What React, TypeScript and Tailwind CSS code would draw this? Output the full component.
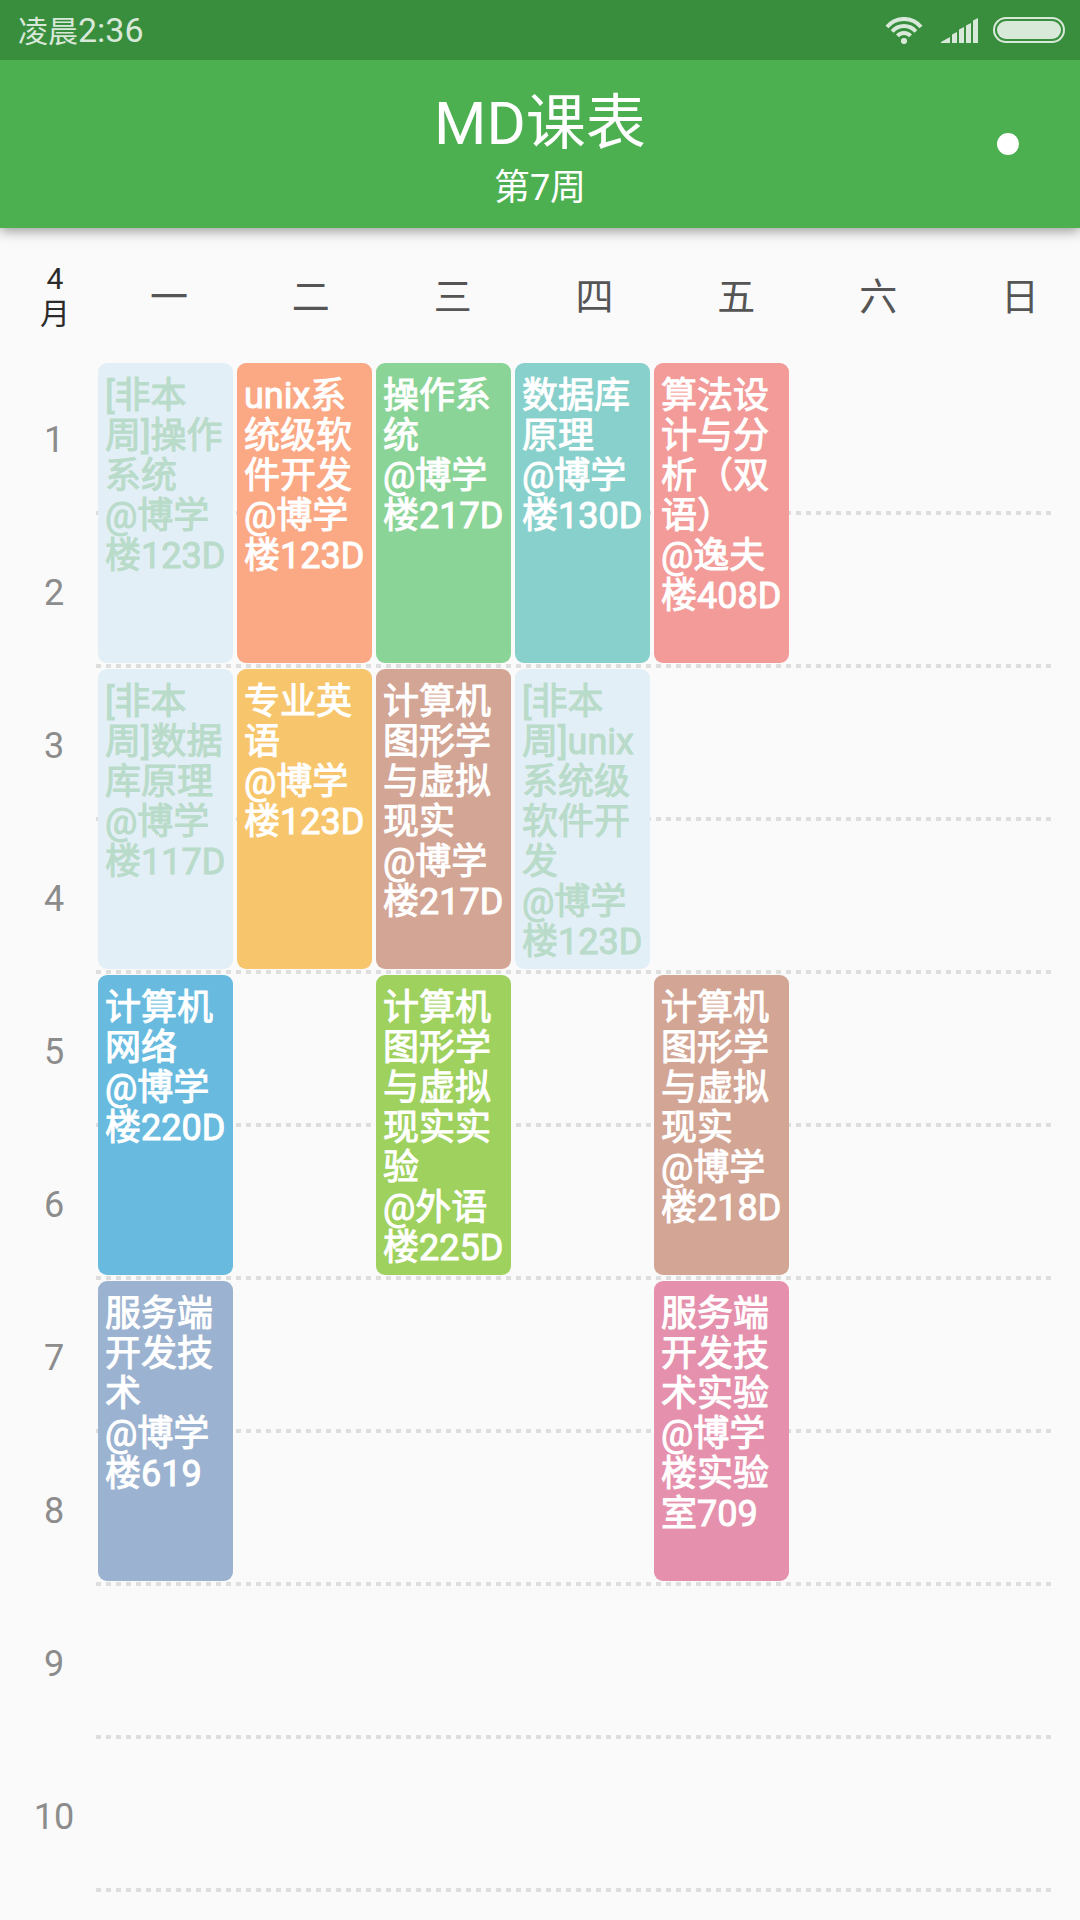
const FONT = 'font-[Roboto,"Noto_Sans_CJK_SC",sans-serif]';

type Course = {
  day: number;
  start: number;
  name: string;
  place: string;
  color: string;
};

const OFF_WEEK = 'bg-[#e3eff6] text-[#b9dbc9]';

const courses: Course[] = [
  { day: 1, start: 1, name: '[非本周]操作系统', place: '@博学楼123D', color: OFF_WEEK },
  { day: 2, start: 1, name: 'unix系统级软件开发', place: '@博学楼123D', color: 'bg-[#fba884] text-white' },
  { day: 3, start: 1, name: '操作系统', place: '@博学楼217D', color: 'bg-[#8bd498] text-white' },
  { day: 4, start: 1, name: '数据库原理', place: '@博学楼130D', color: 'bg-[#88d0cb] text-white' },
  { day: 5, start: 1, name: '算法设计与分析（双语）', place: '@逸夫楼408D', color: 'bg-[#f29b98] text-white' },
  { day: 1, start: 3, name: '[非本周]数据库原理', place: '@博学楼117D', color: OFF_WEEK },
  { day: 2, start: 3, name: '专业英语', place: '@博学楼123D', color: 'bg-[#f7c66c] text-white' },
  { day: 3, start: 3, name: '计算机图形学与虚拟现实', place: '@博学楼217D', color: 'bg-[#d3a595] text-white' },
  { day: 4, start: 3, name: '[非本周]unix系统级软件开发', place: '@博学楼123D', color: OFF_WEEK },
  { day: 1, start: 5, name: '计算机网络', place: '@博学楼220D', color: 'bg-[#68bbdf] text-white' },
  { day: 3, start: 5, name: '计算机图形学与虚拟现实实验', place: '@外语楼225D', color: 'bg-[#9fd15f] text-white' },
  { day: 5, start: 5, name: '计算机图形学与虚拟现实', place: '@博学楼218D', color: 'bg-[#d3a595] text-white' },
  { day: 1, start: 7, name: '服务端开发技术', place: '@博学楼619', color: 'bg-[#9bb3d0] text-white' },
  { day: 5, start: 7, name: '服务端开发技术实验', place: '@博学楼实验室709', color: 'bg-[#e591ad] text-white' },
];

const days = ['一', '二', '三', '四', '五', '六', '日'];
const sections = [1, 2, 3, 4, 5, 6, 7, 8, 9, 10];

function StatusBar() {
  return (
    <div className="relative z-10 flex h-[60px] items-center justify-between bg-[#398e3d] pr-[15px] pl-[18px] text-[#d8e8d9]">
      <div className="pt-[2px] text-[34px] leading-[58px]">
        <span className="text-[30px]">凌晨</span>
        <span>2:36</span>
      </div>
      <div className="flex items-center">
        <svg className="mr-[18px] h-[27px] w-[38px]" viewBox="0 0 38 27" fill="none" stroke="currentColor" strokeWidth="4" aria-hidden="true">
          <path d="M2 10A22 22 0 0 1 36 10" />
          <path d="M7.2 14.6A15.2 15.2 0 0 1 30.8 14.6" />
          <path d="M12.5 18.9A8.5 8.5 0 0 1 25.5 18.9" />
          <circle cx="19" cy="24" r="3.1" fill="currentColor" stroke="none" />
        </svg>
        <svg className="mr-[15px] h-[25px] w-[37px]" viewBox="0 0 37 25" fill="currentColor" aria-hidden="true">
          <path d="M0 24L9 19V25H0ZM11 16.500L16 14V25H11ZM18 11.500L23 9V25H18ZM25 7.500L30 5V25H25ZM32 2.500L37 0V25H32Z" />
        </svg>
        <div className="h-[26px] w-[72px] rounded-full border-2 border-current p-[2px]">
          <div className="h-full rounded-full bg-current" />
        </div>
      </div>
    </div>
  );
}

function TitleBar() {
  return (
    <header className="relative h-[168px] bg-[#4caf50] pt-7 text-center text-white shadow-[0_3px_12px_rgba(0,0,0,0.4)]">
      <h1 className="text-[60px] leading-[72px] font-normal">MD课表</h1>
      <p className="text-[36px] leading-[56px]">第7周</p>
      <button type="button" aria-label="选项" className="absolute top-[60px] right-[48px] flex size-12 items-center justify-center">
        <span className="size-[22px] rounded-full bg-white" />
      </button>
    </header>
  );
}

function WeekHeader() {
  return (
    <div className="flex h-[132px] items-center">
      <div className="w-[110px] pt-1 text-center text-[30px] leading-[35px] text-[#2b2b2b]">
        4<br />月
      </div>
      <div className="flex flex-1 justify-between pt-[6px] pr-[41px] pl-[40px] text-[38px] leading-[44px] text-[#555]">
        {days.map((day) => (
          <span key={day}>{day}</span>
        ))}
      </div>
    </div>
  );
}

function Timetable() {
  return (
    <div className="grid auto-rows-[153px] grid-cols-[96px_repeat(7,minmax(0,1fr))] pr-[11px]">
      {sections.map((n) => (
        <div
          key={n}
          className="col-start-1 flex items-center justify-center pt-[6px] pl-3 text-[36px] leading-[40px] text-[#8c8c8c]"
          style={{ gridRow: n }}
        >
          {n}
        </div>
      ))}
      {sections.map((n) => (
        <div
          key={n}
          className="col-start-2 -col-end-1 -mb-[2px] mr-[18px] h-1 self-end bg-[repeating-linear-gradient(to_right,#dedede_0_5px,transparent_5px_10px)]"
          style={{ gridRow: n }}
        />
      ))}
      {courses.map((c) => (
        <button
          key={`${c.day}-${c.start}`}
          type="button"
          className={`mx-[2px] my-[3px] flex flex-col items-start overflow-hidden rounded-[9px] pt-[13px] pr-[5px] pl-[7px] text-left text-[36px] leading-[40px] [-webkit-text-stroke:1px_currentColor] ${c.color}`}
          style={{ gridColumn: c.day + 1, gridRow: `${c.start} / span 2` }}
        >
          <span>{c.name}</span>
          <span>{c.place}</span>
        </button>
      ))}
    </div>
  );
}

export default function App() {
  return (
    <div lang="zh-CN" className={`min-h-screen bg-[#fafafa] ${FONT}`}>
      <StatusBar />
      <TitleBar />
      <main>
        <WeekHeader />
        <Timetable />
      </main>
    </div>
  );
}
